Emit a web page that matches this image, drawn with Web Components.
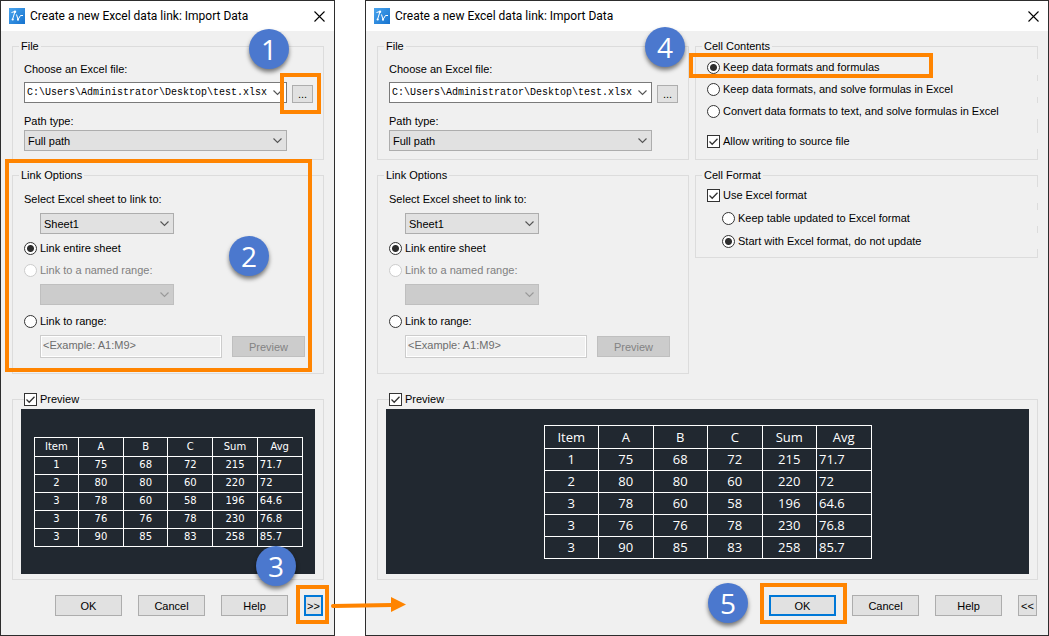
<!DOCTYPE html>
<html lang="en">
<head>
<meta charset="utf-8">
<title>Create a new Excel data link: Import Data</title>
<style>
	body {
		margin: 0;
		background: #fff;
		color: #000;
		font: 11px/16px "Liberation Sans", Arial, sans-serif;
	}

	main {
		display: grid;
		grid-template-columns: 335fr 684fr;
		gap: 30px;
		position: relative;
	}

	.columns {
		display: grid;
		grid-template-columns: 312fr 343fr;
		gap: 6px;
	}

	.stack {
		display: flex;
		flex-direction: column;
		gap: 7px;
	}

	.contents {
		display: flex;
		flex-direction: column;
		gap: 6px;
		padding: 5px 0 10px 11px;
	}

	.contents .apart {
		margin-top: 8px;
	}

	.format {
		display: flex;
		flex-direction: column;
		gap: 7px;
		padding: 4px 0 8px 11px;
	}

	.format .nested {
		margin-left: 15px;
	}
</style>
</head>
<body>
<main>
	<dialog-window heading="Create a new Excel data link: Import Data">
		<link-panel></link-panel>
		<preview-panel></preview-panel>
		<dialog-footer toggle="&gt;&gt;" focus="toggle"></dialog-footer>

		<callout-box slot="notes" style="right: 13px; top: 72px; width: 41px; height: 41px"></callout-box>
		<callout-box slot="notes" style="left: 4px; right: 22px; top: 158px; height: 213px"></callout-box>
		<callout-box slot="notes" style="right: 5px; bottom: 11px; width: 33px; height: 39px"></callout-box>
		<step-badge slot="notes" style="right: 45px; top: 28px">1</step-badge>
		<step-badge slot="notes" style="right: 65px; top: 235px">2</step-badge>
		<step-badge slot="notes" style="right: 38px; bottom: 49px">3</step-badge>
		<flow-arrow slot="notes" style="right: -73px; bottom: 22px"></flow-arrow>
	</dialog-window>

	<dialog-window heading="Create a new Excel data link: Import Data">
		<div class="columns">
			<link-panel></link-panel>
			<div class="stack">
				<group-box label="Cell Contents">
					<div class="contents">
						<choice-option checked>Keep data formats and formulas</choice-option>
						<choice-option>Keep data formats, and solve formulas in Excel</choice-option>
						<choice-option>Convert data formats to text, and solve formulas in Excel</choice-option>
						<choice-option class="apart" type="checkbox" checked>Allow writing to source file</choice-option>
					</div>
				</group-box>
				<group-box label="Cell Format">
					<div class="format">
						<choice-option type="checkbox" checked>Use Excel format</choice-option>
						<choice-option class="nested">Keep table updated to Excel format</choice-option>
						<choice-option class="nested" checked>Start with Excel format, do not update</choice-option>
					</div>
				</group-box>
			</div>
		</div>
		<preview-panel large></preview-panel>
		<dialog-footer toggle="&lt;&lt;" focus="ok"></dialog-footer>

		<callout-box slot="notes" style="right: 115px; top: 52px; width: 244px; height: 25px"></callout-box>
		<callout-box slot="notes" style="right: 201px; bottom: 11px; width: 87px; height: 41px"></callout-box>
		<step-badge slot="notes" style="right: 363px; top: 26px">4</step-badge>
		<step-badge slot="notes" style="right: 300px; bottom: 12px">5</step-badge>
	</dialog-window>
</main>

<script>
const BASE = `
	*, :host { box-sizing: border-box; }
	:host { display: block; }
	button, select, input { font: inherit; color: inherit; margin: 0; border-radius: 0; }
`;

class DialogWindow extends HTMLElement {
	constructor() {
		super();
		this.attachShadow({ mode: "open" });
	}

	connectedCallback() {
		this.shadowRoot.innerHTML = `
			<style>
				${BASE}
				:host {
					position: relative;
					min-width: 0;
					border: 1px solid #2d2d2d;
					background: #f0f0f0;
				}

				header {
					display: flex;
					align-items: center;
					gap: 5px;
					height: 30px;
					padding: 0 7px 0 8px;
					background: #fff;
				}

				h1 {
					flex: 1;
					margin: 0;
					font: 12px/16px Roboto, "Open Sans", sans-serif;
					white-space: nowrap;
				}

				header svg {
					display: block;
				}

				button {
					padding: 2px;
					border: 0;
					background: none;
				}

				.body {
					padding: 7px 10px 19px 11px;
				}
			</style>
			<header>
				<svg width="16" height="16" viewBox="0 0 16 16" aria-hidden="true">
					<defs>
						<linearGradient id="g" x1="0" y1="0" x2="1" y2="1">
							<stop offset="0" stop-color="#4aa5ee"/>
							<stop offset="1" stop-color="#1673cf"/>
						</linearGradient>
					</defs>
					<rect width="16" height="16" fill="url(#g)"/>
					<path d="M2.500 4.500L6 3.500L3.500 11.500M7.500 6.500l1.500 5 2.500-4h2.500" fill="none" stroke="#fff" stroke-width="1"/>
					<circle cx="6" cy="3.700" r="1.200" fill="#fff"/>
					<circle cx="3.700" cy="11.500" r="1.100" fill="#fff"/>
					<circle cx="9" cy="11.700" r="1" fill="#fff"/>
				</svg>
				<h1></h1>
				<button type="button" aria-label="Close">
					<svg width="11" height="11" viewBox="0 0 11 11"><path d="M.5.5l10 10M10.500.5l-10 10" stroke="#000" stroke-width="1.1"/></svg>
				</button>
			</header>
			<div class="body"><slot></slot></div>
			<slot name="notes"></slot>`;
		this.shadowRoot.querySelector("h1").textContent = this.getAttribute("heading");
	}
}

class GroupBox extends HTMLElement {
	constructor() {
		super();
		this.attachShadow({ mode: "open" });
	}

	connectedCallback() {
		this.shadowRoot.innerHTML = `
			<style>
				${BASE}
				fieldset {
					min-width: 0;
					margin: 0;
					padding: 0;
					border: 1px solid #dcdcdc;
				}

				legend {
					height: 16px;
					margin-left: 6px;
					padding: 0 2px;
				}

				:host([checkable]) legend {
					margin-left: 11px;
					padding: 0 3px 0 0;
				}
			</style>
			<fieldset>
				<legend><slot name="legend">${this.getAttribute("label") || ""}</slot></legend>
				<slot></slot>
			</fieldset>`;
	}
}

class ChoiceOption extends HTMLElement {
	constructor() {
		super();
		this.attachShadow({ mode: "open" });
	}

	connectedCallback() {
		const type = this.getAttribute("type") || "radio";
		const checked = this.hasAttribute("checked") ? "checked" : "";
		const disabled = this.hasAttribute("disabled") ? "disabled" : "";

		// the row paints over the right line of its group, like the native control
		this.shadowRoot.innerHTML = `
			<style>
				${BASE}
				:host {
					position: relative;
					margin-right: -1px;
					background: #f0f0f0;
				}

				:host([disabled]) {
					color: #808080;
				}

				label {
					display: flex;
					align-items: center;
					gap: 3px;
					height: 16px;
					white-space: nowrap;
				}

				input {
					flex: none;
					appearance: none;
					width: 13px;
					height: 13px;
					border: 1px solid #333;
					background: #fff;
				}

				input[type="radio"] {
					border-radius: 50%;
				}

				input[type="radio"]:checked {
					background: radial-gradient(circle, #2d2d2d 3px, #fff 4px);
				}

				input[type="checkbox"]:checked {
					background: #fff url("data:image/svg+xml,%3Csvg xmlns='http://www.w3.org/2000/svg' viewBox='0 0 11 11'%3E%3Cpath d='M1.500 5.500l2.700 2.700 5.300-5.500' fill='none' stroke='%23333' stroke-width='1.300'/%3E%3C/svg%3E");
				}

				input:disabled {
					border-color: #ccc;
				}
			</style>
			<label><input type="${type}" ${checked} ${disabled}><slot></slot></label>`;
	}
}

class DropDown extends HTMLElement {
	constructor() {
		super();
		this.attachShadow({ mode: "open" });
	}

	connectedCallback() {
		const label = this.getAttribute("label");
		const value = this.getAttribute("value") || "";

		this.shadowRoot.innerHTML = `
			<style>
				${BASE}
				label {
					display: block;
					margin-bottom: var(--label-gap, 1px);
				}

				.field {
					position: relative;
					margin-left: var(--indent, 0);
				}

				select {
					display: block;
					appearance: none;
					width: 100%;
					height: 21px;
					padding: 0 18px 0 3px;
					border: 1px solid #adadad;
					background: #e1e1e1;
				}

				:host([editable]) select {
					padding: 0 12px 0 2px;
					border-color: #7a7a7a;
					background: #fff;
					font: 10px/16px "Liberation Mono", monospace;
				}

				select:disabled {
					border-color: #bfbfbf;
					background: #ccc;
					opacity: 1;
				}

				svg {
					position: absolute;
					top: 7px;
					right: 5px;
					pointer-events: none;
					stroke: #555;
				}

				:host([disabled]) svg {
					stroke: #999;
				}
			</style>
			${label ? `<label for="list">${label}</label>` : ""}
			<div class="field">
				<select id="list" ${label ? "" : 'aria-label="Named range"'} ${this.hasAttribute("disabled") ? "disabled" : ""}>
					<option>${value}</option>
				</select>
				<svg width="9" height="7" viewBox="0 0 9 7"><path d="M.5 1.500l4 4 4-4" fill="none" stroke-width="1.100"/></svg>
			</div>`;
	}
}

class PushButton extends HTMLElement {
	constructor() {
		super();
		this.attachShadow({ mode: "open" });
	}

	connectedCallback() {
		this.shadowRoot.innerHTML = `
			<style>
				${BASE}
				:host {
					flex: none;
				}

				button {
					display: block;
					width: 100%;
					height: var(--button-height, 21px);
					padding: 0;
					border: 1px solid #adadad;
					background: #e1e1e1;
				}

				:host([focused]) button {
					border: 2px solid #0078d7;
				}

				button:disabled {
					border-color: #bfbfbf;
					background: #ccc;
					color: #838383;
				}
			</style>
			<button type="button" ${this.hasAttribute("disabled") ? "disabled" : ""}><slot></slot></button>`;
	}
}

class LinkPanel extends HTMLElement {
	constructor() {
		super();
		this.attachShadow({ mode: "open" });
	}

	connectedCallback() {
		this.shadowRoot.innerHTML = `
			<style>
				${BASE}
				:host {
					display: flex;
					flex-direction: column;
					gap: 7px;
				}

				.file {
					padding: 7px 10px 8px 11px;
				}

				.path {
					display: flex;
					align-items: flex-end;
					gap: 5px;
					margin-bottom: 10px;
				}

				.path drop-down {
					flex: 1;
					--label-gap: 5px;
				}

				.path push-button {
					width: 21px;
					--button-height: 18px;
				}

				.type {
					margin-right: 26px;
				}

				.options {
					padding: 8px 18px 15px 11px;
				}

				.options drop-down {
					width: 150px;
					--indent: 16px;
					--label-gap: 6px;
				}

				.options choice-option {
					margin: 6px 0;
				}

				.options .by-range {
					margin-top: 8px;
				}

				.range {
					display: flex;
					align-items: center;
					gap: 10px;
					padding-left: 16px;
				}

				.range input {
					flex: 1;
					min-width: 0;
					height: 23px;
					padding: 0 2px 4px;
					border: 1px solid #ccc;
					background: #f0f0f0;
					box-shadow: inset 0 0 0 1px #fff;
				}

				.range input::placeholder {
					color: #6d6d6d;
				}

				.range push-button {
					width: 73px;
				}
			</style>
			<group-box label="File">
				<div class="file">
					<div class="path">
						<drop-down editable label="Choose an Excel file:" value="C:\\Users\\Administrator\\Desktop\\test.xlsx"></drop-down>
						<push-button>...</push-button>
					</div>
					<drop-down class="type" label="Path type:" value="Full path"></drop-down>
				</div>
			</group-box>
			<group-box label="Link Options">
				<div class="options">
					<drop-down label="Select Excel sheet to link to:" value="Sheet1"></drop-down>
					<choice-option checked>Link entire sheet</choice-option>
					<choice-option disabled>Link to a named range:</choice-option>
					<drop-down disabled></drop-down>
					<choice-option class="by-range">Link to range:</choice-option>
					<div class="range">
						<input type="text" placeholder="&lt;Example: A1:M9&gt;" aria-label="Range" disabled>
						<push-button disabled>Preview</push-button>
					</div>
				</div>
			</group-box>`;
	}
}

const COLUMNS = ["Item", "A", "B", "C", "Sum", "Avg"];
const ROWS = [
	[1, 75, 68, 72, 215, 71.7],
	[2, 80, 80, 60, 220, 72],
	[3, 78, 60, 58, 196, 64.6],
	[3, 76, 76, 78, 230, 76.8],
	[3, 90, 85, 83, 258, 85.7],
];

class PreviewPanel extends HTMLElement {
	constructor() {
		super();
		this.attachShadow({ mode: "open" });
	}

	connectedCallback() {
		this.shadowRoot.innerHTML = `
			<style>
				${BASE}
				:host {
					margin-top: 17px;
				}

				.canvas {
					display: flex;
					align-items: center;
					justify-content: center;
					height: 165px;
					margin: 2px 8px 5px;
					background: #212830;
					color: #fff;
				}

				table {
					width: 269px;
					table-layout: fixed;
					border-collapse: collapse;
					font: 10px/14px "DejaVu Sans", sans-serif;
				}

				tr {
					height: 18px;
				}

				thead tr {
					height: 19px;
				}

				th, td {
					padding: 0;
					border: 1px solid #fff;
					font-weight: 400;
					text-align: center;
				}

				td:last-child {
					padding-left: 2px;
					text-align: left;
				}

				:host([large]) table {
					width: 328px;
					font: 13px/18px "Open Sans", "Noto Sans", sans-serif;
				}

				:host([large]) tr {
					height: 22px;
				}

				:host([large]) thead tr {
					height: 23px;
				}
			</style>
			<group-box checkable>
				<choice-option slot="legend" type="checkbox" checked>Preview</choice-option>
				<div class="canvas">
					<table>
						<thead><tr>${COLUMNS.map((c) => "<th>" + c + "</th>").join("")}</tr></thead>
						<tbody>
							${ROWS.map((r) => "<tr>" + r.map((v) => "<td>" + v + "</td>").join("") + "</tr>").join("")}
						</tbody>
					</table>
				</div>
			</group-box>`;
	}
}

class DialogFooter extends HTMLElement {
	constructor() {
		super();
		this.attachShadow({ mode: "open" });
	}

	connectedCallback() {
		const focus = this.getAttribute("focus");

		this.shadowRoot.innerHTML = `
			<style>
				${BASE}
				:host {
					display: flex;
					justify-content: flex-end;
					gap: 16px;
					padding: 15px 1px 0 0;
				}

				push-button {
					width: 67px;
				}

				.toggle {
					width: 19px;
				}
			</style>
			<push-button ${focus === "ok" ? "focused" : ""}>OK</push-button>
			<push-button>Cancel</push-button>
			<push-button>Help</push-button>
			<push-button class="toggle" ${focus === "toggle" ? "focused" : ""}></push-button>`;
		this.shadowRoot.querySelector(".toggle").textContent = this.getAttribute("toggle");
	}
}

class CalloutBox extends HTMLElement {
	constructor() {
		super();
		this.attachShadow({ mode: "open" }).innerHTML = `
			<style>
				${BASE}
				:host {
					position: absolute;
					border: 4px solid #ff8400;
					pointer-events: none;
				}
			</style>`;
	}
}

class StepBadge extends HTMLElement {
	constructor() {
		super();
		this.attachShadow({ mode: "open" }).innerHTML = `
			<style>
				${BASE}
				:host {
					position: absolute;
					width: 40px;
					height: 40px;
					border-radius: 50%;
					background: #4b78ce;
					box-shadow: 0 3px 4px rgba(0, 0, 0, 0.5);
					color: #fff;
					font: 500 28px/40px "Open Sans", "Noto Sans", sans-serif;
					text-align: center;
				}
			</style>
			<slot></slot>`;
	}
}

class FlowArrow extends HTMLElement {
	constructor() {
		super();
		this.attachShadow({ mode: "open" }).innerHTML = `
			<style>
				${BASE}
				:host {
					position: absolute;
					z-index: 1;
				}

				svg {
					display: block;
				}
			</style>
			<svg width="77" height="16" viewBox="0 0 77 16" aria-hidden="true">
				<path d="M3 9L62 8" stroke="#ff8400" stroke-width="4" stroke-linecap="round"/>
				<path d="M61 0l15 7.500L61 15z" fill="#ff8400"/>
			</svg>`;
	}
}

customElements.define("group-box", GroupBox);
customElements.define("choice-option", ChoiceOption);
customElements.define("drop-down", DropDown);
customElements.define("push-button", PushButton);
customElements.define("link-panel", LinkPanel);
customElements.define("preview-panel", PreviewPanel);
customElements.define("dialog-footer", DialogFooter);
customElements.define("callout-box", CalloutBox);
customElements.define("step-badge", StepBadge);
customElements.define("flow-arrow", FlowArrow);
customElements.define("dialog-window", DialogWindow);
</script>
</body>
</html>
